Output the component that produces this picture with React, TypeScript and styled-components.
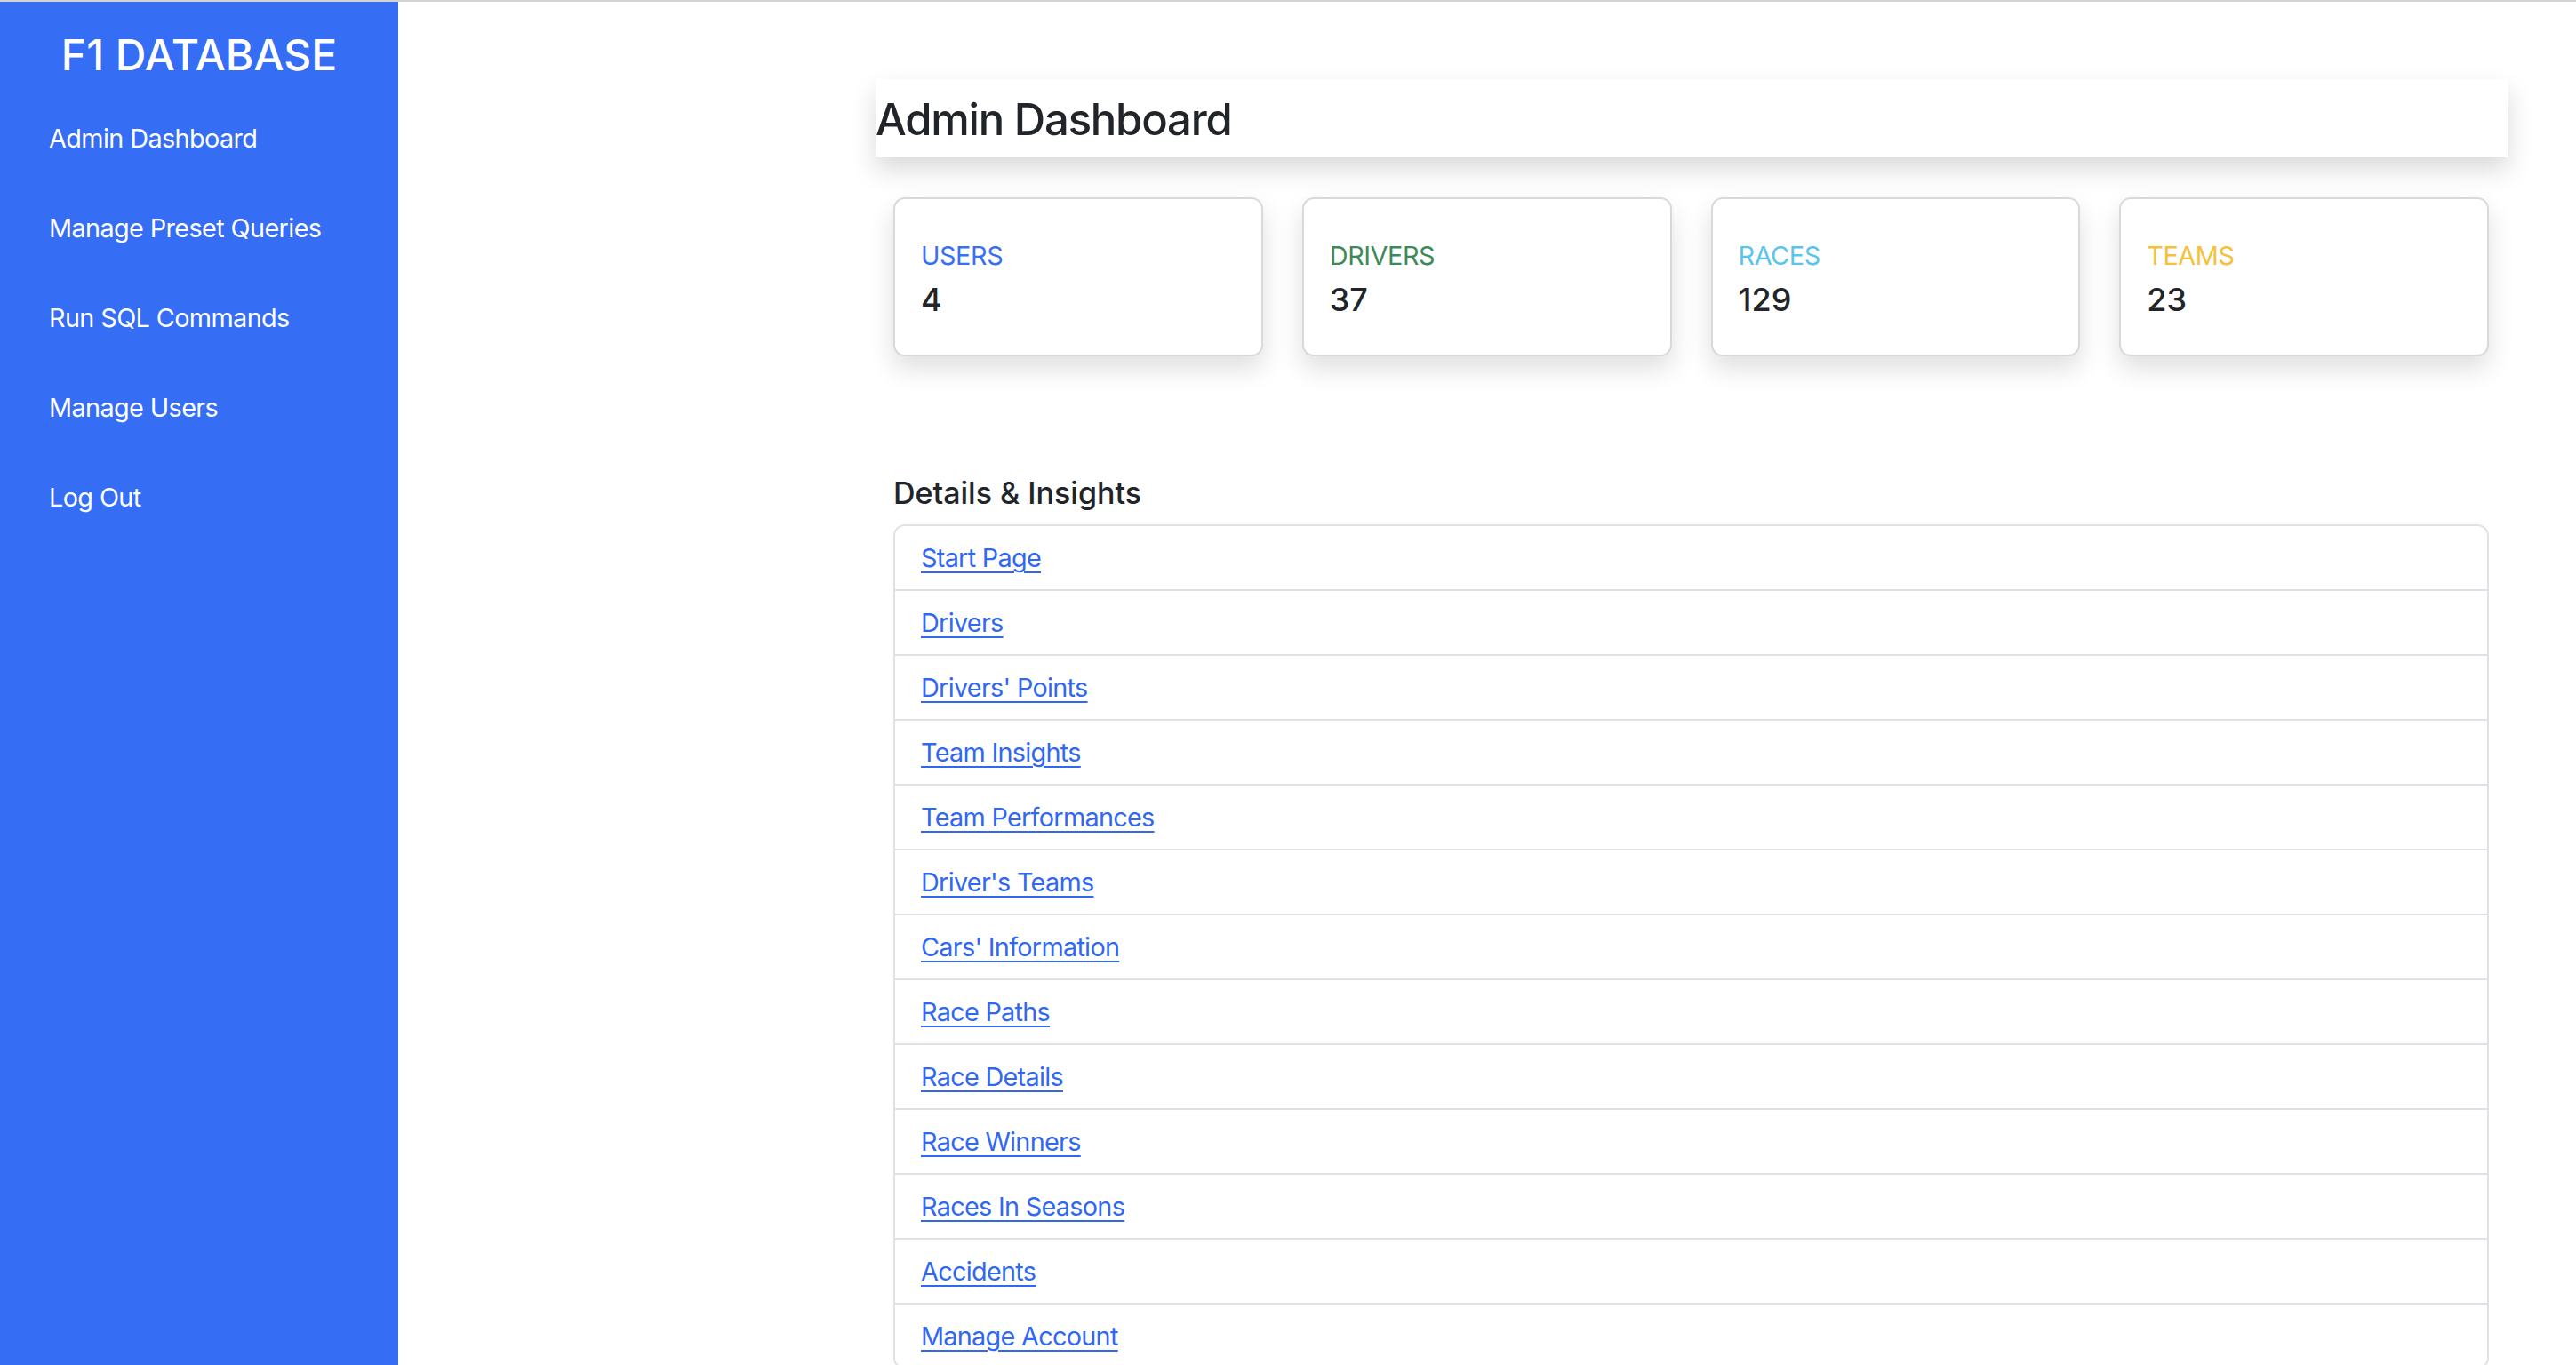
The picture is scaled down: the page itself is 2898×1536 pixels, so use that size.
import React from 'react'
import styled, { createGlobalStyle } from 'styled-components'

const GlobalStyle = createGlobalStyle`
  html, body {
    margin: 0;
    padding: 0;
    background: #ffffff;
  }
  body {
    border-top: 2px solid #d2d2d2;
    font-family: Inter, "Noto Sans", "Liberation Sans", sans-serif;
    color: #212529;
    overflow: hidden;
  }
  * {
    box-sizing: border-box;
  }
`

const Layout = styled.div`
  display: flex;
  min-height: 1534px;
`

const Sidebar = styled.nav`
  width: 448px;
  flex-shrink: 0;
  background: #356df4;
  padding-top: 32px;
  display: flex;
  flex-direction: column;
`

const Brand = styled.h1`
  margin: 0 0 16px;
  text-align: center;
  color: #ffffff;
  font-size: 48px;
  font-weight: 500;
  line-height: 55px;
`

const NavLink = styled.a`
  display: block;
  padding: 29px 55px;
  color: #ffffff;
  font-size: 28.8px;
  line-height: 43px;
  letter-spacing: -0.6px;
  text-decoration: none;
`

const Main = styled.main`
  flex: 1;
  padding: 87px 76px 0 537px;
`

const HeaderBox = styled.div`
  background: #ffffff;
  box-shadow: 0 14px 29px rgba(0, 0, 0, 0.15);
  padding: 16px 0 12px;
`

const PageTitle = styled.h2`
  margin: 0;
  font-size: 49px;
  font-weight: 500;
  line-height: 60px;
  letter-spacing: -1.2px;
`

const Content = styled.div`
  padding: 0 22px 0 20px;
`

const CardRow = styled.div`
  display: grid;
  grid-template-columns: repeat(4, 1fr);
  gap: 44px;
  margin-top: 45px;
`

const Card = styled.div`
  background: #ffffff;
  border: 2px solid rgba(0, 0, 0, 0.15);
  border-radius: 13px;
  box-shadow: 0 14px 29px rgba(0, 0, 0, 0.13);
  padding: 42px 29px 36px;
  height: 179px;
`

const CardLabel = styled.div<{ $color: string }>`
  color: ${({ $color }) => $color};
  font-size: 28.8px;
  line-height: 43px;
  letter-spacing: -0.4px;
  margin-bottom: 7px;
`

const CardValue = styled.div`
  font-size: 36px;
  font-weight: 500;
  line-height: 43px;
`

const SectionTitle = styled.h5`
  margin: 132px 0 14px;
  font-size: 34px;
  font-weight: 500;
  line-height: 43px;
`

const List = styled.ul`
  list-style: none;
  margin: 0;
  padding: 0;
  border: 2px solid #dee2e6;
  border-radius: 13px;
  overflow: hidden;
`

const ListItem = styled.li`
  padding: 14px 29px;
  line-height: 43px;
  font-size: 28.8px;
  letter-spacing: -0.7px;
  & + & {
    border-top: 2px solid #dee2e6;
  }
`

const ListLink = styled.a`
  color: #3068f2;
  text-decoration: underline;
  text-underline-offset: 5px;
  text-decoration-thickness: 2px;
`

const navItems = ['Admin Dashboard', 'Manage Preset Queries', 'Run SQL Commands', 'Manage Users', 'Log Out']

const stats = [
  { label: 'USERS', value: 4, color: '#3a6ff4' },
  { label: 'DRIVERS', value: 37, color: '#3c8a57' },
  { label: 'RACES', value: 129, color: '#58c6ec' },
  { label: 'TEAMS', value: 23, color: '#f6c13a' },
]

const pages = [
  'Start Page',
  'Drivers',
  "Drivers' Points",
  'Team Insights',
  'Team Performances',
  "Driver's Teams",
  "Cars' Information",
  'Race Paths',
  'Race Details',
  'Race Winners',
  'Races In Seasons',
  'Accidents',
  'Manage Account',
]

const App = () => {
  return (
    <>
      <GlobalStyle />
      <Layout>
        <Sidebar>
          <Brand>F1 DATABASE</Brand>
          {navItems.map((item) => (
            <NavLink key={item} href="#">
              {item}
            </NavLink>
          ))}
        </Sidebar>

        <Main>
          <HeaderBox>
            <PageTitle>Admin Dashboard</PageTitle>
          </HeaderBox>

          <Content>
            <CardRow>
              {stats.map((s) => (
                <Card key={s.label}>
                  <CardLabel $color={s.color}>{s.label}</CardLabel>
                  <CardValue>{s.value}</CardValue>
                </Card>
              ))}
            </CardRow>

            <SectionTitle>Details &amp; Insights</SectionTitle>
            <List>
              {pages.map((p) => (
                <ListItem key={p}>
                  <ListLink href="#">{p}</ListLink>
                </ListItem>
              ))}
            </List>
          </Content>
        </Main>
      </Layout>
    </>
  )
}

export default App
